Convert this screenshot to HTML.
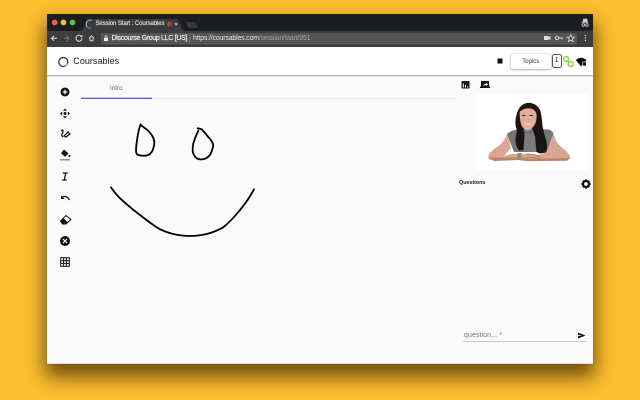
<!DOCTYPE html>
<html>
<head>
<meta charset="utf-8">
<style>
html,body{margin:0;padding:0;width:640px;height:400px;overflow:hidden;background:#fcbf2f;font-family:"Liberation Sans",sans-serif;}
#all{position:absolute;left:0;top:0;width:640px;height:400px;filter:blur(.3px);}
.a{position:absolute;white-space:nowrap;}
#win{position:absolute;left:47px;top:14px;width:546px;height:350px;background:#fafafa;border-bottom:1px solid #ddd;box-sizing:border-box;box-shadow:0 11px 18px 2px rgba(60,35,0,.72);overflow:hidden;}
</style>
</head>
<body>
<div id="all">
<div id="win"></div>
<svg class="a" style="left:0;top:0" width="640" height="400" viewBox="0 0 640 400">
  <!-- tab bar -->
  <rect x="47" y="14" width="546" height="17" fill="#1c1d20"/>
  <path d="M80 31 Q83 30 84 27 L86 21 Q86.600 19 88.500 19 H176 Q178 19 178.600 21 L181 27 Q182 30 185 31Z" fill="#3a3b3d"/>
  <path d="M186 22 H195 L198 28 H188.500Z" fill="#37383b"/>
  <circle cx="54.700" cy="22.500" r="2.900" fill="#ed5f57"/>
  <circle cx="63.500" cy="22.500" r="2.900" fill="#f5bd3d"/>
  <circle cx="72.500" cy="22.500" r="2.900" fill="#5fc54a"/>
  <!-- toolbar -->
  <rect x="47" y="31" width="546" height="16" fill="#3b3c3e"/>
  <rect x="101" y="33" width="476" height="11.500" rx="1" fill="#545557"/>
  <!-- favicon in tab -->
  <path d="M91 28 A4 4 0 1 1 92 20.500" fill="none" stroke="#a3a8ac" stroke-width="1"/>
  <path d="M87 27 A4 4 0 0 0 90 28" fill="none" stroke="#2f7fb5" stroke-width="1"/>
  <circle cx="169.300" cy="24" r="2.500" fill="#a9443a"/>
  <path d="M175 22.800 l2.300 2.600 M177.300 22.800 l-2.300 2.600" stroke="#ddd" stroke-width=".7"/>
  <!-- nav icons -->
  <path d="M57 38.300 H52 M54 35.800 L51.500 38.300 L54 40.800" fill="none" stroke="#e4e4e4" stroke-width="1"/>
  <path d="M69 38.300 H64 M66.500 35.800 L69 38.300 L66.500 40.800" fill="none" stroke="#77787a" stroke-width="1"/>
  <path d="M82 38.300 A3 3 0 1 1 81 36" fill="none" stroke="#e4e4e4" stroke-width="1"/>
  <path d="M82.500 34.800 V37.300 H80Z" fill="#e4e4e4"/>
  <path d="M89 38.300 L91.500 35.800 L94 38.300 M90 37.800 V40.800 H93 V37.800" fill="none" stroke="#e4e4e4" stroke-width=".9"/>
  <path d="M104 37.800 h4 v3.200 h-4z" fill="#eee"/>
  <path d="M105 37.800 v-1 a1 1 0 0 1 2 0 v1" fill="none" stroke="#eee" stroke-width=".7"/>
  <rect x="189.500" y="34.500" width=".7" height="8" fill="#888"/>
  <!-- right toolbar icons -->
  <path d="M544 36 h4.500 v1 l2 -1 v4 l-2 -1 v1 h-4.500z" fill="#dedede"/>
  <circle cx="557" cy="38" r="1.700" fill="none" stroke="#dedede" stroke-width=".9"/>
  <path d="M558.700 38 h3.500 v1.500" fill="none" stroke="#dedede" stroke-width=".9"/>
  <path d="M570.800 34.500 l1 2.500 2.700 .2 -2.100 1.700 .7 2.600 -2.300 -1.400 -2.300 1.400 .7 -2.600 -2.100 -1.700 2.700 -.2z" fill="none" stroke="#dedede" stroke-width=".8"/>
  <circle cx="585.400" cy="35.500" r=".7" fill="#ddd"/><circle cx="585.400" cy="38" r=".7" fill="#ddd"/><circle cx="585.400" cy="40.500" r=".7" fill="#ddd"/>
  <!-- incognito -->
  <path d="M581.500 22.500 h7 M583 22 l.7 -3 h3 l.7 3" fill="#cfcfcf" stroke="#cfcfcf" stroke-width=".8"/>
  <circle cx="583.300" cy="25" r="1.300" fill="none" stroke="#cfcfcf" stroke-width=".8"/>
  <circle cx="586.900" cy="25" r="1.300" fill="none" stroke="#cfcfcf" stroke-width=".8"/>
  <!-- header -->
  <rect x="47" y="47" width="546" height="28" fill="#fff"/>
  <rect x="47" y="75" width="546" height="1.300" fill="#b4b4b4"/>
  <!-- logo -->
  <circle cx="63.300" cy="62" r="4.500" fill="none" stroke="#222" stroke-width="1.200"/>
  <path d="M59.500 64.500 A4.500 4.500 0 0 0 63.500 66.500" fill="none" stroke="#2a6d9c" stroke-width="1.300"/>
  <path d="M65 66.200 A4.500 4.500 0 0 0 67.500 63.500" fill="none" stroke="#c9a53a" stroke-width="1.300"/>
  <!-- stop -->
  <rect x="497.500" y="58.500" width="5" height="5" fill="#111"/>
  <!-- links icon -->
  <circle cx="566" cy="59" r="2.500" fill="none" stroke="#8fd12e" stroke-width="1.400"/>
  <circle cx="570.700" cy="64" r="2.500" fill="none" stroke="#8fd12e" stroke-width="1.400"/>
  <path d="M567.800 61 L569 62.200" stroke="#8fd12e" stroke-width="1.200"/>
  <!-- wifi icon -->
  <path d="M575.800 60 Q581 55.500 586.500 60 L581 66.500Z" fill="#111"/>
  <rect x="582.800" y="62" width="3.500" height="4" fill="#111" stroke="#fff" stroke-width=".6"/>
  <!-- tab underline -->
  <rect x="81" y="98" width="374" height="1" fill="#ececec"/>
  <rect x="81" y="97.700" width="71" height="1.300" fill="#6a55c4"/>
  <!-- sidebar icons -->
  <circle cx="65" cy="92" r="4.500" fill="#111"/>
  <path d="M62.700 92 h4.600 M65 89.700 v4.600" stroke="#fff" stroke-width="1.200"/>
  <path d="M65 108.500 l2 2.200 h-4z M65 118.500 l2 -2.200 h-4z M60 113.500 l2.200 -2 v4z M70 113.500 l-2.200 -2 v4z" fill="#111"/>
  <circle cx="65" cy="113.500" r="1.500" fill="#111"/>
  <path d="M61 131 q2 -2 2 0 t-1 3 t1 3 M64 136 l4 -4 2 2 -4 3z" fill="none" stroke="#111" stroke-width="1.200"/>
  <path d="M64 149.500 l4.500 4 -3.500 3.200 -4 -3.500z" fill="#111"/>
  <circle cx="69.500" cy="156" r="1" fill="#111"/>
  <rect x="60" y="159" width="10" height="1.500" fill="#8e8e8e"/>
  <path d="M62.700 173 h5 M62.200 180 h4.400 M65.800 173 l-1.500 7" fill="none" stroke="#111" stroke-width="1.300"/>
  <path d="M61 199 V195.500 L64.500 199Z" fill="#111"/>
  <path d="M62 197.500 Q66 194.500 69.500 200" fill="none" stroke="#111" stroke-width="1.300"/>
  <path d="M60.500 221 L66 215.500 L71 219.500 L66 224 H62.500Z" fill="#fff" stroke="#111" stroke-width="1"/>
  <path d="M60.500 221 L63.500 218.200 L67.800 222.300 L66 224 H62.500Z" fill="#111"/>
  <circle cx="65" cy="241" r="5" fill="#111"/>
  <path d="M63 239 l4 4 M67 239 l-4 4" stroke="#fff" stroke-width="1.200"/>
  <rect x="60.700" y="257.700" width="8.600" height="8.600" fill="none" stroke="#111" stroke-width="1"/>
  <path d="M63.600 257.500 v9 M66.400 257.500 v9 M60.500 260.600 h9 M60.500 263.400 h9" stroke="#111" stroke-width="1"/>
  <!-- doodle -->
  <g fill="none" stroke="#000" stroke-width="1.800" stroke-linecap="round" stroke-linejoin="round">
    <path d="M140.700 124.300 Q140 126 139.300 128.300 Q138 133 137.300 138.300 Q136 146 136 151.700 Q136.500 154.500 138.300 155 Q141.500 156 145 155.700 Q148 155.500 150 154 Q152.500 151.500 153.300 148.300 Q154.500 145 154.300 141.700 Q153.800 138 151.700 135 Q149 131 145 128.300 Q142 126 140.700 125"/>
    <path d="M197.700 128.300 Q199.500 128.500 201.700 129.300 Q205 132.500 208 136.700 Q212 140.500 213.300 145 Q212.500 150.500 210 155 Q207 158.500 203 159.300 Q199.500 160 196.700 158.300 Q193.500 155.500 192.700 151.700 Q192.500 147 193.300 143.300 Q195.500 136.500 198.300 130.700"/>
    <path d="M111 187.300 Q114 192 120 198.300 Q130 207.500 140 215 Q150 223 158.300 228.300 Q165 232 173.300 234 Q182 236 190 236 Q198 236 206.700 234 Q216 231.500 223.300 227.300 Q232 220 240 210 Q248 200.500 254 189.300"/>
  </g>
  <!-- right icons -->
  <rect x="461.500" y="81" width="8" height="7.500" rx=".6" fill="#161616"/>
  <path d="M463.300 83.500 v4 M465.500 85 v2.500 M467.700 86.200 v1.300" stroke="#fff" stroke-width="1"/>
  <rect x="481" y="81" width="8" height="6" fill="#161616"/>
  <rect x="480" y="86.500" width="10" height="1.500" fill="#161616"/>
  <path d="M483 86 q.5 -2 3 -2.300 v-1 l2 1.700 -2 1.700 v-1 q-2 0 -3 .9" fill="#fff"/>
  <!-- photo -->
  <rect x="476" y="94" width="112" height="76" fill="#fff"/>
  <!-- shirt -->
  <path d="M507 134 Q510 131 518 129 L538 129 L549 129.500 Q553 131 553.500 134 L550 143 L548 152 H514 L510 142Z" fill="#75767a"/>
  <!-- arms -->
  <path d="M507 134 Q505 140 500 145 Q492 150 489 154 Q487.500 158 489.500 159.500 Q493 161 500 160.500 L518 159.500 L528 161 Q537 161.500 541 160.500 L553 160.500 L566 160.500 Q571 159.500 570 156 Q567 151 561 147 Q556 143 553.500 134 L550 143 Q547 151 545 153 L538 155 L528 153.500 L519 154 L512 154 Q508 154.500 504 156 L511 148 L509 140Z" fill="#d9a78f"/>
  <path d="M489 157 Q500 158.500 520 157 L530 159 L545 158.500 L570 158 L567 160.800 L540 161 L528 161.300 L518 160 L494 161 Z" fill="#bd8369"/>
  <!-- hair -->
  <path d="M517 130 Q514 124 516.500 115 Q519 104 528 102.800 Q537 103 540.500 111 Q542 118 542.500 126 Q544 134 546.500 141 Q548 148 546 152.500 L540 153.500 L536.500 152 L535 136 L524.500 136 L523.500 150 L519 150.500 Q515 145 515.500 139Z" fill="#1d1412"/>
  <!-- neck and chest -->
  <path d="M524 128 H532 L534.500 135 L535.500 152 H524 L524.500 135Z" fill="#7b7c80"/>
  <path d="M523 130 Q528 136 533 130" fill="none" stroke="#5f6064" stroke-width=".8"/>
  <!-- face -->
  <path d="M519.700 111.500 Q525 107.500 531 108.500 Q535.500 110 536.500 114 Q537 120 535 124 Q532 129.500 528.500 130.300 Q524 130.500 521.500 125.500 Q519.500 120 519.700 111.500Z" fill="#e0ad98"/>
  <path d="M524 122.500 Q528 125.200 532 122.500 Q528 127 524 122.500Z" fill="#f7eeea"/>
  <path d="M522 115.500 h3.500 M529.500 115.500 h3.500" stroke="#3a2418" stroke-width="1"/>
  <!-- hands -->
  <path d="M517.500 153 h4 v6.500 h-4z" fill="#8d8c86"/>
  <path d="M526 155 Q533 153 541 157.500 M526 158 Q534 156.500 541 159.500" fill="none" stroke="#a9735c" stroke-width=".7"/>
  <!-- gear -->
  <circle cx="586" cy="184" r="3" fill="none" stroke="#111" stroke-width="2.200"/>
  <path d="M586 179.300 v2 M586 186.700 v2 M581.300 184 h2 M588.700 184 h2 M582.700 180.700 l1.400 1.400 M587.900 185.900 l1.400 1.400 M589.300 180.700 l-1.400 1.400 M584.100 185.900 l-1.400 1.400" stroke="#111" stroke-width="1.700"/>
  <!-- input line and send -->
  <rect x="463" y="341" width="124" height="1" fill="#c8c8c8"/>
  <path d="M578 332.500 L585.500 335.500 L578 338.500 V336.300 L582 335.500 L578 334.700Z" fill="#111"/>
</svg>
<div class="a" style="left:95.500px;top:20px;font-size:6px;line-height:8px;color:#e0e0e0;letter-spacing:-.08px;-webkit-text-stroke:.15px #e0e0e0;">Session Start : Coursables</div>
<div class="a" style="left:111.500px;top:34px;font-size:7px;line-height:9px;color:#eeeeee;letter-spacing:-.3px;-webkit-text-stroke:.2px #eeeeee;">Discourse Group LLC [US]</div>
<div class="a" style="left:193px;top:34px;font-size:6.900px;line-height:9px;color:#e6e6e6;letter-spacing:-.14px;">https://coursables.com<span style="color:#a2a2a2">/session/start/951</span></div>
<div class="a" style="left:73.300px;top:55px;font-size:9px;line-height:13px;color:#1a1a1a;letter-spacing:.03px;">Coursables</div>
<div class="a" style="left:511px;top:53.500px;width:39.500px;height:15.500px;background:#fff;border-radius:2px;box-shadow:0 .5px 2px rgba(0,0,0,.45);font-size:6px;line-height:16px;text-align:center;color:#333;">Topics</div>
<div class="a" style="left:552px;top:54px;width:7.500px;height:12px;border:1px solid #555;border-radius:2.500px;font-size:7px;line-height:12px;text-align:center;color:#111;background:#fff;">1</div>
<div class="a" style="left:110px;top:84.500px;font-size:6.300px;line-height:8px;color:#666;">Intro</div>
<div class="a" style="left:459px;top:178.500px;font-size:5.400px;line-height:8px;font-weight:bold;color:#222;">Questions</div>
<div class="a" style="left:464px;top:330.500px;font-size:7px;line-height:10px;color:#777;letter-spacing:.08px;">question... *</div>
</div>
</body>
</html>
